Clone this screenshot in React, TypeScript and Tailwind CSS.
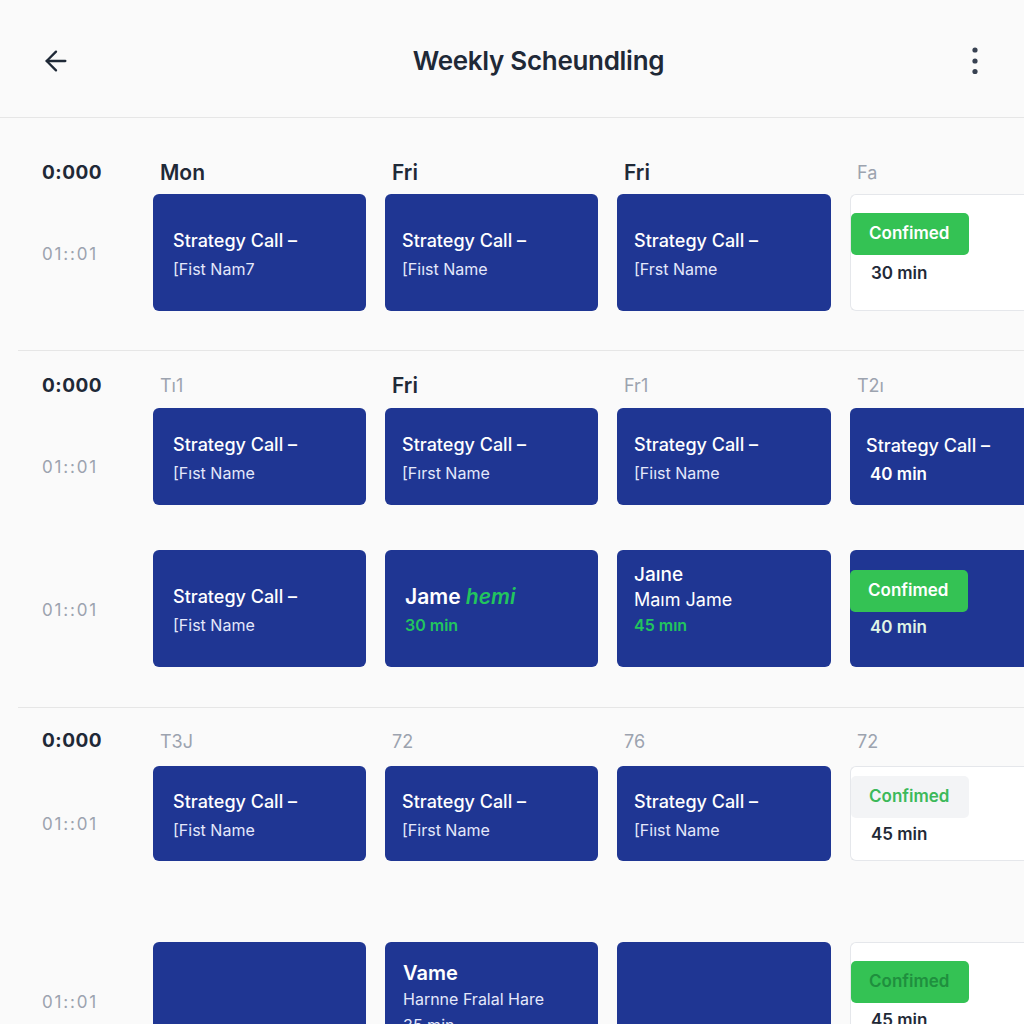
import { ArrowLeft } from 'lucide-react'
import type { ReactNode } from 'react'

const font = { fontFamily: 'Inter, "Noto Sans", sans-serif' }

function TimeCell({ children, bold, shift = '' }: { children: ReactNode; bold?: boolean; shift?: string }) {
  return (
    <div
      className={
        bold
          ? 'flex items-center text-[19px] font-bold text-[#1f2937] tracking-[0.5px]'
          : 'flex items-center text-[17px] text-[#9ca3af] tracking-[1.8px]'
      }
    >
      <span className={shift}>{children}</span>
    </div>
  )
}

function DayLabel({ children, muted }: { children: ReactNode; muted?: boolean }) {
  return (
    <div
      className={
        muted
          ? 'pl-[7px] flex items-center text-[18px] text-[#9ca3af]'
          : 'pl-[7px] flex items-center text-[21px] font-semibold text-[#1f2937]'
      }
    >
      {children}
    </div>
  )
}

function CallCard({ sub, first }: { sub: string; first?: boolean }) {
  return (
    <div
      className={`rounded-[6px] bg-[#1f3693] flex flex-col justify-center pt-1 text-white ${
        first ? 'pl-5' : 'pl-[17px]'
      }`}
    >
      <div className="text-[18px] font-medium leading-[28px]">Strategy Call –</div>
      <div className="text-[16px] leading-[28px] text-[#e4e8fb]">{sub}</div>
    </div>
  )
}

function Badge({ variant }: { variant: 'green' | 'light' | 'dim' }) {
  const cls =
    variant === 'green'
      ? 'bg-[#34c254] text-white'
      : variant === 'dim'
        ? 'bg-[#34c254] text-[#1f8f3e]'
        : 'bg-[#f3f4f6] text-[#3cb95a]'
  return (
    <div className={`w-[118px] h-[42px] rounded-[5px] flex items-center pl-[18px] text-[17px] font-semibold ${cls}`}>
      Confimed
    </div>
  )
}

function StatusCard({ badgeTop, variant, mins, gap }: { badgeTop: string; variant: 'green' | 'light' | 'dim'; mins: string; gap: string }) {
  return (
    <div className={`rounded-l-[6px] bg-white border border-[#e5e7eb] border-r-0 ${badgeTop}`}>
      <Badge variant={variant} />
      <div className={`pl-[20px] text-[17px] font-semibold text-[#1f2937] ${gap}`}>{mins}</div>
    </div>
  )
}

const grid = 'grid grid-cols-[92px_213px_213px_214px_200px] gap-x-[19px]'

export default function App() {
  return (
    <div className="h-[1024px] w-[1024px] overflow-hidden bg-[#fafafa]" style={font}>
      {/* Header */}
      <div className="h-[118px] border-b border-[#e6e6e6] flex items-center pl-[40px] pr-[43px] pt-1">
        <ArrowLeft size={32} strokeWidth={1.75} className="text-[#1f2937]" />
        <div className="flex-1 text-center pl-[36px] text-[26px] font-semibold tracking-[-0.3px] text-[#1f2937]">
          Weekly Scheundling
        </div>
        <svg width="12" height="34" viewBox="0 0 12 34" className="text-[#374151]">
          <circle cx="6" cy="6" r="2.6" fill="currentColor" />
          <circle cx="6" cy="17" r="2.6" fill="currentColor" />
          <circle cx="6" cy="27.5" r="2.6" fill="currentColor" />
        </svg>
      </div>

      {/* Section 1 */}
      <div className="ml-[18px] pl-[24px] pt-[39px] pb-[39px] overflow-hidden">
        <div className={`${grid} h-[24px]`}>
          <TimeCell bold>0:000</TimeCell>
          <DayLabel>Mon</DayLabel>
          <DayLabel>Fri</DayLabel>
          <DayLabel>Fri</DayLabel>
          <DayLabel muted>Fa</DayLabel>
        </div>
        <div className={`${grid} h-[117px] mt-[13px]`}>
          <TimeCell shift="mt-[5px]">01::01</TimeCell>
          <CallCard first sub="[Fist Nam7" />
          <CallCard sub="[Fiıst Name" />
          <CallCard sub="[Frst Name" />
          <StatusCard badgeTop="pt-[18px]" variant="green" mins="30 min" gap="mt-[6px]" />
        </div>
      </div>

      {/* Section 2 */}
      <div className="ml-[18px] pl-[24px] pt-[19px] pb-[40px] border-t border-[#e6e6e6] overflow-hidden">
        <div className={`${grid} h-[24px]`}>
          <TimeCell bold>0:000</TimeCell>
          <DayLabel muted>Tı1</DayLabel>
          <DayLabel>Fri</DayLabel>
          <DayLabel muted>Fr1</DayLabel>
          <DayLabel muted>T2ı</DayLabel>
        </div>
        <div className={`${grid} h-[97px] mt-[14px]`}>
          <TimeCell shift="mt-[22px]">01::01</TimeCell>
          <CallCard first sub="[Fıst Name" />
          <CallCard sub="[Fırst Name" />
          <CallCard sub="[Fiıst Name" />
          <div className="rounded-l-[6px] bg-[#1f3693] flex flex-col justify-center pt-[6px] pl-[16px] text-white">
            <div className="text-[18px] font-medium leading-[28px]">Strategy Call –</div>
            <div className="pl-[4px] text-[17px] font-semibold leading-[28px]">40 min</div>
          </div>
        </div>
        <div className={`${grid} h-[117px] mt-[45px]`}>
          <TimeCell shift="mt-[4px]">01::01</TimeCell>
          <CallCard first sub="[Fist Name" />
          <div className="rounded-[6px] bg-[#1f3693] flex flex-col justify-center pl-[20px] pt-[2px]">
            <div className="text-[21px] font-semibold leading-[30px] text-white">
              Jame <span className="italic text-[#22c55e]">hemi</span>
            </div>
            <div className="text-[16px] font-semibold leading-[26px] text-[#22c55e]">30 min</div>
          </div>
          <div className="rounded-[6px] bg-[#1f3693] flex flex-col pt-[13px] pl-[17px]">
            <div className="text-[19px] font-medium leading-[24px] text-white">Jaıne</div>
            <div className="text-[18px] leading-[25px] text-white">Maım Jame</div>
            <div className="text-[16px] font-semibold leading-[26px] text-[#22c55e]">45 mın</div>
          </div>
          <div className="rounded-l-[6px] bg-[#1f3693] pt-[20px]">
            <Badge variant="green" />
            <div className="pl-[20px] mt-[3px] text-[17px] font-semibold text-[#e0f5e6]">40 min</div>
          </div>
        </div>
      </div>

      {/* Section 3 */}
      <div className="ml-[18px] pl-[24px] pt-[19px] border-t border-[#e6e6e6] overflow-hidden">
        <div className={`${grid} h-[24px]`}>
          <TimeCell bold>0:000</TimeCell>
          <DayLabel muted>T3J</DayLabel>
          <DayLabel muted>72</DayLabel>
          <DayLabel muted>76</DayLabel>
          <DayLabel muted>72</DayLabel>
        </div>
        <div className={`${grid} h-[95px] mt-[15px]`}>
          <TimeCell shift="mt-[22px]">01::01</TimeCell>
          <CallCard first sub="[Fist Name" />
          <CallCard sub="[First Name" />
          <CallCard sub="[Fiıst Name" />
          <StatusCard badgeTop="pt-[9px]" variant="light" mins="45 min" gap="mt-[4px]" />
        </div>
        <div className={`${grid} h-[130px] mt-[81px]`}>
          <TimeCell shift="-mt-[8px]">01::01</TimeCell>
          <div className="rounded-[6px] bg-[#1f3693]" />
          <div className="rounded-[6px] bg-[#1f3693] pt-[18px] pl-[18px] text-white">
            <div className="text-[20px] font-semibold leading-[26px]">Vame</div>
            <div className="text-[16px] leading-[26px] text-[#e4e8fb]">Harnne Fralal Hare</div>
            <div className="text-[16px] leading-[26px] text-[#e4e8fb]">35 min</div>
          </div>
          <div className="rounded-[6px] bg-[#1f3693]" />
          <StatusCard badgeTop="pt-[18px]" variant="dim" mins="45 min" gap="mt-[5px]" />
        </div>
      </div>
    </div>
  )
}
